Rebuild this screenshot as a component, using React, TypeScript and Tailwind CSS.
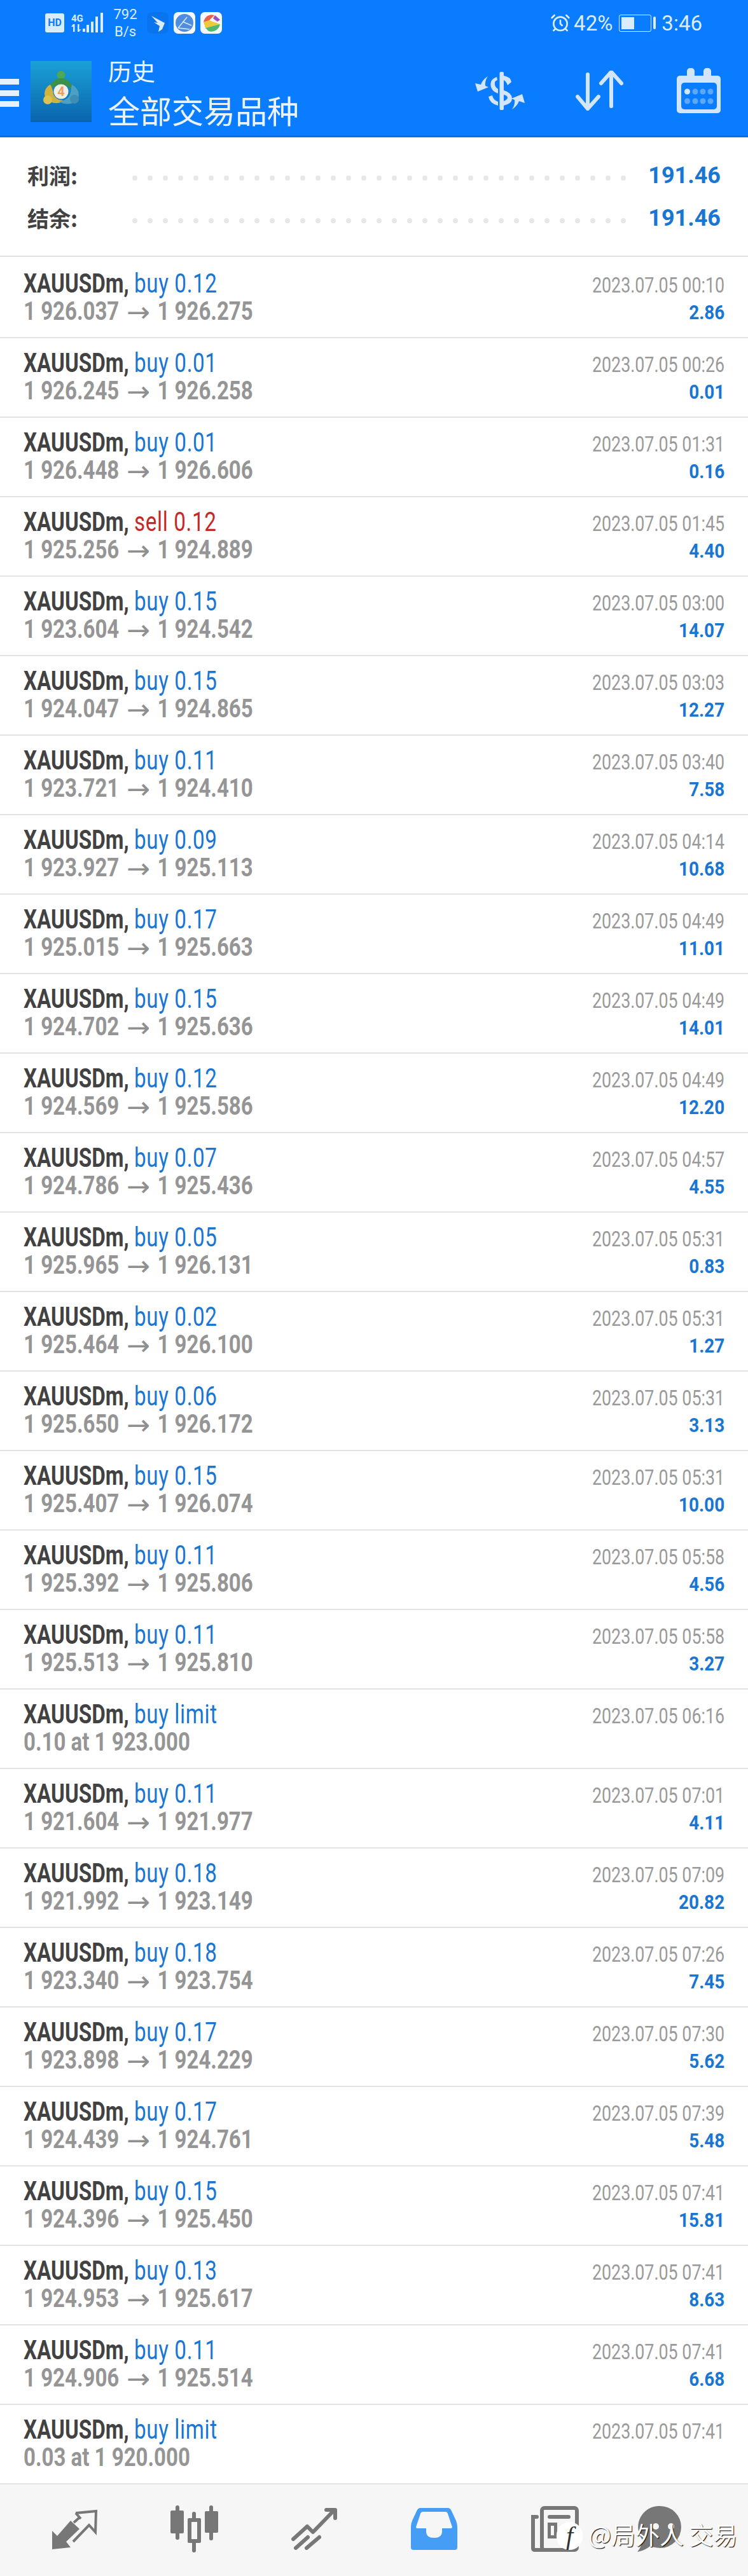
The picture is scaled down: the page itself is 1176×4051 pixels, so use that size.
import { AlarmClock } from "lucide-react";

const trades = [
  ["buy", "0.12", "1 926.037", "1 926.275", "00:10", "2.86"],
  ["buy", "0.01", "1 926.245", "1 926.258", "00:26", "0.01"],
  ["buy", "0.01", "1 926.448", "1 926.606", "01:31", "0.16"],
  ["sell", "0.12", "1 925.256", "1 924.889", "01:45", "4.40"],
  ["buy", "0.15", "1 923.604", "1 924.542", "03:00", "14.07"],
  ["buy", "0.15", "1 924.047", "1 924.865", "03:03", "12.27"],
  ["buy", "0.11", "1 923.721", "1 924.410", "03:40", "7.58"],
  ["buy", "0.09", "1 923.927", "1 925.113", "04:14", "10.68"],
  ["buy", "0.17", "1 925.015", "1 925.663", "04:49", "11.01"],
  ["buy", "0.15", "1 924.702", "1 925.636", "04:49", "14.01"],
  ["buy", "0.12", "1 924.569", "1 925.586", "04:49", "12.20"],
  ["buy", "0.07", "1 924.786", "1 925.436", "04:57", "4.55"],
  ["buy", "0.05", "1 925.965", "1 926.131", "05:31", "0.83"],
  ["buy", "0.02", "1 925.464", "1 926.100", "05:31", "1.27"],
  ["buy", "0.06", "1 925.650", "1 926.172", "05:31", "3.13"],
  ["buy", "0.15", "1 925.407", "1 926.074", "05:31", "10.00"],
  ["buy", "0.11", "1 925.392", "1 925.806", "05:58", "4.56"],
  ["buy", "0.11", "1 925.513", "1 925.810", "05:58", "3.27"],
  ["buy limit", "", "0.10 at 1 923.000", "", "06:16", ""],
  ["buy", "0.11", "1 921.604", "1 921.977", "07:01", "4.11"],
  ["buy", "0.18", "1 921.992", "1 923.149", "07:09", "20.82"],
  ["buy", "0.18", "1 923.340", "1 923.754", "07:26", "7.45"],
  ["buy", "0.17", "1 923.898", "1 924.229", "07:30", "5.62"],
  ["buy", "0.17", "1 924.439", "1 924.761", "07:39", "5.48"],
  ["buy", "0.15", "1 924.396", "1 925.450", "07:41", "15.81"],
  ["buy", "0.13", "1 924.953", "1 925.617", "07:41", "8.63"],
  ["buy", "0.11", "1 924.906", "1 925.514", "07:41", "6.68"],
  ["buy limit", "", "0.03 at 1 920.000", "", "07:41", ""],
];

const dots = Array.from({ length: 33 }, (_, i) => i);

function SummaryRow({ label, value }: { label: string; value: string }) {
  return (
    <div className="flex h-[67px] items-center">
      <span className="w-[165px] shrink-0 pb-[8px] font-['Noto_Sans_CJK_SC',sans-serif] text-[34px] font-bold leading-none text-[#424242]">
        {label}
      </span>
      <div className="flex w-[776px] shrink-0 justify-between">
        {dots.map((d) => (
          <span key={d} className="h-[8px] w-[8px] rounded-full bg-[#e8e8e8]" />
        ))}
      </div>
      <span className="ml-auto pb-[8px] font-['Roboto',sans-serif] text-[36px] font-bold leading-none text-[#1976d2]">
        {value}
      </span>
    </div>
  );
}

function TradeRow({ trade }: { trade: string[] }) {
  const [side, lots, open, close, time, profit] = trade;
  return (
    <div className="flex h-[125px] shrink-0 justify-between border-b-[2px] border-[#e3e3e3] pl-[37px] pr-[37px] pt-[17px] font-['Roboto',sans-serif] first:h-[128px] first:pt-[20px]">
      <div className="flex w-0 flex-col">
        <div className="origin-left scale-x-[0.79] whitespace-nowrap text-[42px] leading-[44px]">
          <span className="font-bold text-[#424242]">XAUUSDm, </span>
          <span className={side === "sell" ? "tracking-[0.8px] text-[#c62828]" : "tracking-[0.8px] text-[#1976d2]"}>
            {side} {lots}
          </span>
        </div>
        <div className="origin-left scale-x-[0.825] whitespace-nowrap text-[40px] font-bold leading-[44px] text-[#959595]">
          {open}
          {close && (
            <span className="mx-[18px] inline-block translate-y-[3px] scale-x-[1.22] font-['DejaVu_Sans',sans-serif] text-[44px] font-normal leading-[0] text-[#8f8f8f]">
              →
            </span>
          )}
          {close}
        </div>
      </div>
      <div className="flex w-0 flex-col items-end">
        <div className="origin-right scale-x-[0.813] whitespace-nowrap pt-[5px] text-[33px] leading-[40px] text-[#9a9a9a]">
          2023.07.05 {time}
        </div>
        <div className="origin-right scale-x-[0.9] whitespace-nowrap pt-[5px] text-[31px] font-bold leading-[36px] text-[#1976d2]">
          {profit}
        </div>
      </div>
    </div>
  );
}

function AppLogo() {
  return (
    <svg viewBox="0 0 96 96" className="h-[96px] w-[96px]">
      <defs>
        <linearGradient id="tile" x1="0" y1="0" x2="0" y2="1">
          <stop offset="0" stopColor="#1ba1d5" />
          <stop offset="1" stopColor="#0a64ad" />
        </linearGradient>
      </defs>
      <rect width="96" height="96" fill="url(#tile)" />
      <circle cx="48" cy="22" r="6.5" fill="#4fa757" />
      <path d="M48 27C38 27 30 36 29 46C35 40 41 38 48 38C55 38 61 40 67 46C66 36 58 27 48 27Z" fill="#3c9148" />
      <path d="M31 37C22 42 20 52 24 58C30 67 44 69 53 62C44 62 38 58 36 52C35 46 34 42 31 37Z" fill="#d0b23f" />
      <circle cx="27" cy="61" r="7" fill="#dcc24e" />
      <path d="M65 37C76 43 78 54 74 60C68 68 56 70 45 64C54 62 60 58 62 52C64 46 64 42 65 37Z" fill="#4d9fc4" />
      <circle cx="69" cy="60" r="7" fill="#3f8db3" />
      <circle cx="48" cy="48" r="11.5" fill="#f2efe8" />
      <text x="48" y="55" textAnchor="middle" fontFamily="Roboto, sans-serif" fontSize="20" fontWeight="700" fill="#eda05a">
        4
      </text>
    </svg>
  );
}

function StatusBar() {
  return (
    <div className="flex h-[85px] items-center pb-[13px] pl-[71px] pr-[72px] text-[#dcecff]">
      <span className="flex h-[30px] w-[30px] items-center justify-center rounded-[3px] bg-[#d9ecfb] font-['Roboto',sans-serif] text-[16px] font-bold text-[#0a7cff]">
        HD
      </span>
      <div className="ml-[11px] flex w-[18px] flex-col font-['Roboto',sans-serif] text-[15px] font-bold leading-[16px]">
        <span>4G</span>
        <svg viewBox="0 0 18 14" className="h-[14px] w-[18px]" fill="#dcecff">
          <rect x="3" y="1" width="2.5" height="12" />
          <path d="M3 1L0 5h3z" />
          <rect x="10" y="1" width="2.5" height="12" />
          <path d="M12.5 13l3-4h-3z" />
        </svg>
      </div>
      <svg viewBox="0 0 32 32" className="h-[32px] w-[32px]" fill="#dcecff">
        <rect x="0" y="25" width="4" height="5" />
        <rect x="6" y="19" width="4" height="12" />
        <rect x="13" y="14" width="4" height="17" />
        <rect x="20" y="6" width="4" height="25" />
        <rect x="28" y="0" width="4" height="31" />
      </svg>
      <div className="ml-[16px] flex w-[38px] flex-col items-center font-['Roboto',sans-serif] text-[22px] leading-[27px]">
        <span>792</span>
        <span>B/s</span>
      </div>
      <div className="ml-[15px] flex gap-[8px]">
        <svg viewBox="0 0 34 34" className="h-[34px] w-[34px]">
          <rect width="34" height="34" rx="8" fill="#0a73ee" />
          <path d="M7 6L28 17L24 27L18 31L20 22L11 16L17 17Z" fill="#dcecff" />
        </svg>
        <svg viewBox="0 0 34 34" className="h-[34px] w-[34px]">
          <rect width="34" height="34" rx="7" fill="#f5f9ff" />
          <circle cx="17" cy="17" r="14" fill="#4f8de0" />
          <path d="M7 25L21 8M7 25l18 2M14 15l14 6" stroke="#dcebff" strokeWidth="1.5" fill="none" />
        </svg>
        <svg viewBox="0 0 34 34" className="h-[34px] w-[34px]">
          <rect width="34" height="34" rx="7" fill="#f5f9ff" />
          <path d="M5 16A13 14 0 0 1 22 5L14 13Z" fill="#e8604c" />
          <path d="M5 16L14 13L31 19L8 25Z" fill="#f0c93a" />
          <path d="M8 25L31 19A14 14 0 0 1 13 30Z" fill="#52b86a" />
          <path d="M23 5L31 12L27 15L20 10Z" fill="#a04cc4" />
        </svg>
      </div>
      <div className="ml-auto flex items-center font-['Roboto',sans-serif] text-[33px] leading-none">
        <AlarmClock className="h-[32px] w-[32px]" strokeWidth={2} />
        <span className="ml-[5px]">42%</span>
        <span className="ml-[10px] flex h-[27px] w-[51px] items-center rounded-[3px] border border-[#dcecff] p-[3px]">
          <span className="h-full w-[20px] bg-[#dcecff]" />
        </span>
        <span className="ml-[3px] h-[20px] w-[4px] rounded-sm bg-[#dcecff]" />
        <span className="ml-[9px]">3:46</span>
      </div>
    </div>
  );
}

function SwapIcon() {
  return (
    <svg viewBox="0 0 78 60" className="h-[60px] w-[78px]" fill="#d3e5fb">
      <rect x="38.5" y="0" width="6.5" height="60" rx="2" />
      <path d="M45 6Q56 8 57 16L51 21Q49 15 45 13Z" />
      <path d="M34 8Q22 12 25 24Q27 31 36 34V27Q30 23 31 17Q31 14 35 13Z" />
      <path d="M21 39L27 37Q28 44 36 47V53Q23 50 21 39Z" />
      <path d="M45 29Q58 33 58 42Q58 50 45 53V46Q50 44 51 41Q51 37 45 36Z" />
      <path d="M0 18L9 20Q12 12 20 7Q15 14 16 22L21 24L4 31Z" />
      <path d="M78 49L69 46Q66 54 58 59Q63 52 62 44L57 42L74 35Z" />
    </svg>
  );
}

function SortIcon() {
  return (
    <svg viewBox="0 0 75 63" className="h-[63px] w-[75px]" fill="none" stroke="#d3e5fb" strokeWidth="6" strokeLinecap="round" strokeLinejoin="round">
      <path d="M19 6V59M3 41L19 60L36 41" />
      <path d="M56 56V3M40 20L56 2L72 20" />
    </svg>
  );
}

function CalendarIcon() {
  return (
    <svg viewBox="0 0 69 71" className="h-[71px] w-[69px]">
      <rect x="16" y="0" width="12" height="16" rx="5" fill="#d3e5fb" />
      <rect x="42" y="0" width="12" height="16" rx="5" fill="#d3e5fb" />
      <rect x="0" y="12" width="69" height="59" rx="5" fill="#d3e5fb" />
      <rect x="7" y="23" width="56" height="42" rx="5" fill="#0a7cff" />
      {[16.5, 29, 41, 53].map((cx, i) => (
        <g key={cx}>
          <circle cx={cx} cy="37" r="4.5" fill={i === 0 ? "#d3e5fb" : "#5ea8fb"} />
          <circle cx={cx} cy="52" r="4.5" fill="#5ea8fb" />
        </g>
      ))}
    </svg>
  );
}

function Header() {
  return (
    <div className="flex h-[131px] items-start border-b-[3px] border-[#0a6fe0]">
      <div className="mt-[39px] flex h-[44px] w-[30px] flex-col justify-between">
        <span className="h-[9px] bg-[#e6f1ff]" />
        <span className="h-[9px] bg-[#e6f1ff]" />
        <span className="h-[9px] bg-[#e6f1ff]" />
      </div>
      <div className="ml-[18px] mt-[11px]">
        <AppLogo />
      </div>
      <div className="ml-[26px] mt-[8px] flex flex-col font-['Noto_Sans_CJK_SC',sans-serif] leading-none text-[#eaf3ff]">
        <span className="text-[37px]">历史</span>
        <span className="mt-[17px] text-[50px]">全部交易品种</span>
      </div>
      <div className="ml-auto mr-[43px] mt-[22px] flex h-[71px] items-center">
        <SwapIcon />
        <div className="ml-[80px]"><SortIcon /></div>
        <div className="ml-[84px]"><CalendarIcon /></div>
      </div>
    </div>
  );
}

function BottomBar() {
  return (
    <div className="relative flex h-[144px] shrink-0 items-center bg-[#f6f6f6] pb-[4px] pl-[82px]">
      <svg viewBox="0 0 72 63" className="h-[63px] w-[72px] shrink-0">
        <path d="M0 63L0 34L8 42L29 18L43 31L22 51L29 60Z" fill="#777" />
        <path d="M37 6L69 3L68 36L58 25L33 51M45 15L37 6M34 21L44 12" fill="none" stroke="#777" strokeWidth="4" />
      </svg>
      <svg viewBox="0 0 75 74" className="ml-[114px] h-[74px] w-[75px] shrink-0" fill="#777">
        <rect x="8" y="0" width="6" height="54" rx="3" />
        <rect x="0" y="8" width="21" height="36" rx="2" />
        <rect x="34" y="10" width="6" height="64" rx="3" />
        <rect x="27" y="20" width="21" height="39" rx="2" />
        <rect x="61" y="0" width="6" height="55" rx="3" />
        <rect x="54" y="9" width="21" height="34" rx="2" />
        <rect x="33" y="26" width="9" height="27" fill="#f6f6f6" />
      </svg>
      <svg viewBox="0 0 72 66" className="ml-[115px] h-[66px] w-[72px] shrink-0" fill="none" stroke="#777" strokeWidth="6" strokeLinecap="round" strokeLinejoin="round">
        <path d="M3 49L25 29L34 38L66 5" />
        <path d="M55 3H69V16" />
        <path d="M7 63L26 46M24 63L44 46" />
      </svg>
      <svg viewBox="0 0 73 66" className="ml-[116px] h-[66px] w-[73px] shrink-0">
        <path d="M15 0H58Q62 0 64 5L71 20Q73 25 73 30V62Q73 66 69 66H4Q0 66 0 62V30Q0 25 2 20L9 5Q11 0 15 0Z" fill="#459df5" />
        <path d="M19 6H54Q57 6 58 9L65 30Q65 32 63 32H49V37Q49 47 36.5 47Q24 47 24 37V32H10Q8 32 8 30L15 9Q16 6 19 6Z" fill="#f6f6f6" />
      </svg>
      <svg viewBox="0 0 76 72" className="ml-[115px] h-[72px] w-[76px] shrink-0" fill="none" stroke="#777">
        <path d="M10 17H4V66Q4 69 7 69H20" strokeWidth="6" strokeLinecap="round" />
        <rect x="18" y="3" width="55" height="66" rx="4" strokeWidth="6" />
        <path d="M30 17H60" strokeWidth="6" strokeLinecap="round" />
        <rect x="29.5" y="28.5" width="10" height="20" strokeWidth="5" />
      </svg>
      <svg viewBox="0 0 72 72" className="ml-[92px] h-[72px] w-[72px] shrink-0">
        <path d="M36 0A33 33 0 0 1 36 66Q28 66 20 63Q12 70 0 72Q7 64 8 53A33 33 0 0 1 36 0Z" fill="#777" />
        <circle cx="29" cy="32" r="5" fill="#f6f6f6" />
        <circle cx="53" cy="32" r="5" fill="#f6f6f6" />
      </svg>
      {/* watermark over the tab bar */}
      <div className="absolute left-[875px] top-[59px] flex items-start font-['Noto_Sans_CJK_SC',sans-serif] text-[38px] leading-none text-white [text-shadow:1px_1px_1px_#000]">
        <span className="flex h-[44px] w-[41px] items-center justify-center rounded-full bg-white font-['Liberation_Serif',serif] text-[40px] italic text-[#333] [text-shadow:none]">
          f
        </span>
        <span className="ml-[9px]">@局外人 交易</span>
      </div>
    </div>
  );
}

export default function App() {
  return (
    <div className="flex h-[4051px] w-[1176px] flex-col overflow-hidden bg-white">
      <div className="shrink-0 bg-[#0a7cff]">
        <StatusBar />
        <Header />
      </div>
      <div className="flex h-[188px] shrink-0 flex-col border-b-[2px] border-[#e0e0e0] pl-[43px] pr-[43px] pt-[30px]">
        <SummaryRow label="利润:" value="191.46" />
        <SummaryRow label="结余:" value="191.46" />
      </div>
      <div className="flex flex-1 flex-col overflow-hidden">
        {trades.map((t, i) => (
          <TradeRow key={i} trade={t} />
        ))}
      </div>
      <BottomBar />
    </div>
  );
}
